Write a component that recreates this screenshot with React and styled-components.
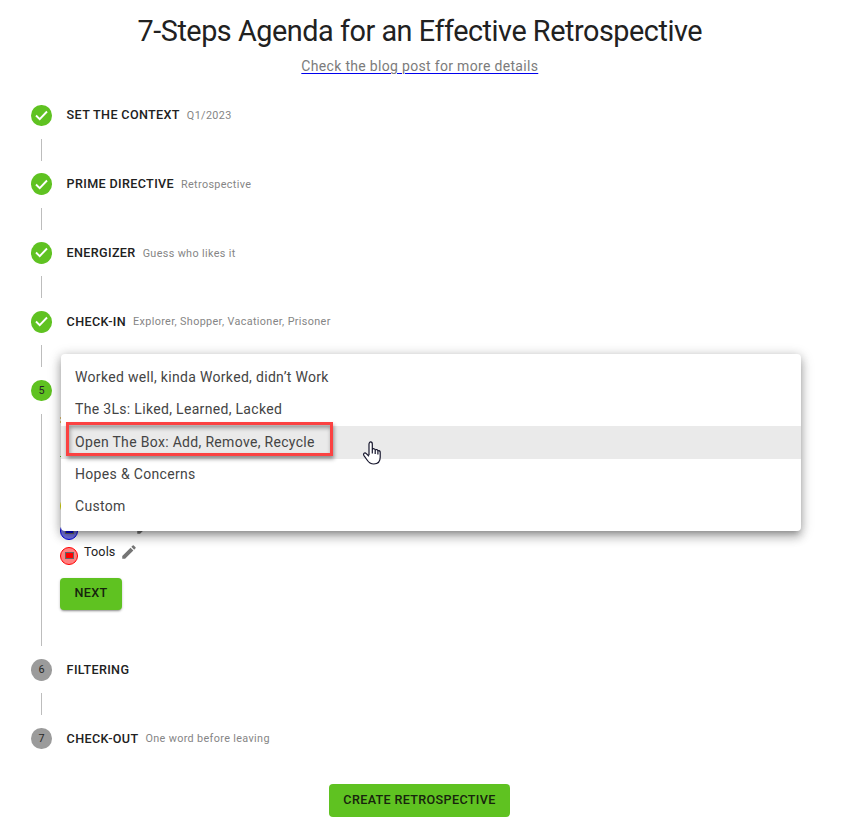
import React from "react";
import styled, { createGlobalStyle } from "styled-components";

const Global = createGlobalStyle`
  * { box-sizing: border-box; }
  body { margin: 0; background: #fff; font-family: Roboto, "Liberation Sans", sans-serif; color: #212121; }
`;
const Page = styled.main`
  width: 847px;
  height: 822px;
  overflow: hidden;
  display: flex;
  flex-direction: column;
`;
const Header = styled.header`
  width: 839.6px;
  height: 92px;
  flex-shrink: 0;
  display: flex;
  flex-direction: column;
  align-items: center;
`;
const Title = styled.h1`
  margin: 12px 0 0;
  font-size: 28.8px;
  line-height: 38px;
  font-weight: 400;
  letter-spacing: -0.46px;
  white-space: nowrap;
  color: #212121;
`;
const BlogLink = styled.a`
  margin-top: 6px;
  font-size: 14px;
  line-height: 20px;
  font-weight: 400;
  letter-spacing: 0.32px;
  color: #7b7b7b;
  text-decoration-line: underline;
  text-decoration-color: #0000ee;
  text-decoration-thickness: 1px;
  text-underline-offset: 2px;
`;
const Stepper = styled.section`
  display: flex;
  flex-direction: column;
  padding-left: 31px;
`;
const StepRow = styled.div`
  height: 46.8px;
  display: flex;
  align-items: center;
`;
const Badge = styled.span`
  width: 21px;
  height: 21.6px;
  margin-right: 14.6px;
  border-radius: 50%;
  background: ${(p) => (p.$active ? "#5fc221" : "#9b9b9b")};
  display: flex;
  align-items: center;
  justify-content: center;
  font-size: 10.8px;
  color: #272727;
`;
const StepName = styled.span`
  font-size: 12.6px;
  line-height: 20px;
  font-weight: 500;
  letter-spacing: 0.35px;
  color: #212121;
`;
const StepNote = styled.span`
  margin: 1.1px 0 0 7px;
  font-size: 10.8px;
  line-height: 20px;
  font-weight: 400;
  letter-spacing: 0.36px;
  color: #858585;
`;
const Connector = styled.div`
  height: 22px;
  margin-left: 10px;
  border-left: 1px solid #bdbdbd;
`;
const StepBody = styled.div`
  position: relative;
  height: 232.5px;
  margin-left: 10px;
  padding-left: 18px;
  border-left: 1px solid #bdbdbd;
  display: flex;
  flex-direction: column;
  align-items: flex-start;
`;
const Columns = styled.div`
  display: flex;
  flex-direction: column;
  gap: 7px;
  padding-top: 83px;
`;
const ColumnRow = styled.div`
  height: 18px;
  display: flex;
  align-items: center;
`;
const Swatch = styled.span`
  width: 18px;
  height: 18px;
  border: 1px solid ${(p) => p.$color};
  border-radius: 50%;
  background: ${(p) => p.$tint};
  display: flex;
  align-items: center;
  justify-content: center;
  &::after {
    content: "";
    box-sizing: border-box;
    width: 9px;
    height: 7px;
    margin: -1px 0 0 1px;
    background: ${(p) => p.$color};
    border: 1px solid #666;
  }
`;
const ColumnName = styled.span`
  width: ${(p) => p.$width}px;
  margin: -8px 5px 0 6px;
  font-size: 12.6px;
  line-height: 18px;
  letter-spacing: 0.12px;
  white-space: nowrap;
`;
const Pencil = styled.svg`
  width: 18px;
  height: 18px;
  margin-top: -8px;
  fill: #757575;
`;
const Button = styled.button`
  display: block;
  width: ${(p) => p.$width}px;
  height: ${(p) => (p.$raised ? 32 : 33)}px;
  padding: 0 0 1px;
  border: 0;
  border-radius: 4px;
  background: #5fc221;
  color: #17240d;
  font: 500 12.6px/22px Roboto, sans-serif;
  letter-spacing: 0.34px;
  box-shadow: ${(p) => (p.$raised ? "0 2px 2px -1px rgba(0,0,0,.3), 0 1px 3px rgba(0,0,0,.2)" : "none")};
`;
const NextSlot = styled.div`
  margin-top: 13px;
`;
const Footer = styled.footer`
  width: 839px;
  padding-top: 22px;
  display: flex;
  justify-content: center;
`;
const Menu = styled.ul`
  position: absolute;
  left: 19px;
  top: -60px;
  width: 740px;
  height: 177px;
  margin: 0;
  padding: 7px 0 8px;
  list-style: none;
  border-radius: 4px;
  background: #fff;
  box-shadow: 0 5px 5px -3px rgba(0,0,0,.2), 0 7px 9px 1px rgba(0,0,0,.14), 0 3px 13px 2px rgba(0,0,0,.14), 0 1px 10px rgba(0,0,0,.13);
`;
const MenuItem = styled.li`
  height: ${(p) => (p.$selected ? 33 : 32.4)}px;
  padding-left: 14px;
  font-size: 14px;
  line-height: ${(p) => (p.$low ? 31.6 : 33)}px;
  letter-spacing: 0.32px;
  color: #444;
  background: ${(p) => (p.$selected ? "#eaeaea" : "transparent")};
`;
const Highlight = styled.span`
  position: absolute;
  left: 5px;
  top: 68px;
  width: 267px;
  height: 34px;
  border: 3px solid #fb4242;
  box-shadow: 1px 3px 4px rgba(0,0,0,.4), inset 1px 3px 4px rgba(0,0,0,.35);
`;
const Cursor = styled.svg`
  position: absolute;
  left: 301px;
  top: 86px;
  width: 20px;
  height: 26px;
`;
const CoveredEdge = styled.i`
  position: absolute;
  left: 18px;
  top: ${(p) => p.$top}px;
  width: 2px;
  height: ${(p) => p.$height}px;
  background: ${(p) => p.$color};
`;

const Check = () => (
  <svg width="21" height="21" viewBox="0 0 21 21" fill="none">
    <path d="M5 10.5 8.7 14.1 16 6.5" stroke="#fff" strokeWidth="1.9" />
  </svg>
);

function Step({ n, name, note, done, active }) {
  return (
    <StepRow>
      <Badge $active={done || active}>{done ? <Check /> : n}</Badge>
      <StepName>{name}</StepName>
      {note && <StepNote>{note}</StepNote>}
    </StepRow>
  );
}

const finished = [
  ["SET THE CONTEXT", "Q1/2023"],
  ["PRIME DIRECTIVE", "Retrospective"],
  ["ENERGIZER", "Guess who likes it"],
  ["CHECK-IN", "Explorer, Shopper, Vacationer, Prisoner"],
];
const columns = [
  { name: "", width: 44, color: "#e6e600", tint: "#f2f27f" },
  { name: "", width: 46, color: "#0000e6", tint: "#7777e8" },
  { name: "Tools", width: 31, color: "#ff0000", tint: "#ff8080" },
];
const options = [
  "Worked well, kinda Worked, didn’t Work",
  "The 3Ls: Liked, Learned, Lacked",
  "Open The Box: Add, Remove, Recycle",
  "Hopes & Concerns",
  "Custom",
];

export default function App() {
  return (
    <Page>
      <Global />
      <Header>
        <Title>7-Steps Agenda for an Effective Retrospective</Title>
        <BlogLink href="#">Check the blog post for more details</BlogLink>
      </Header>
      <Stepper>
        {finished.map(([name, note]) => (
          <React.Fragment key={name}>
            <Step name={name} note={note} done />
            <Connector />
          </React.Fragment>
        ))}
        <Step n={5} active />
        <StepBody>
          <Columns>
            {columns.map((c) => (
              <ColumnRow key={c.color}>
                <Swatch $color={c.color} $tint={c.tint} />
                <ColumnName $width={c.width}>{c.name}</ColumnName>
                <Pencil viewBox="0 0 24 24">
                  <path d="M3 17.25V21h3.75L17.81 9.94l-3.75-3.75zM20.71 7.04a1 1 0 0 0 0-1.41l-2.34-2.34a1 1 0 0 0-1.41 0l-1.83 1.83 3.75 3.75z" />
                </Pencil>
              </ColumnRow>
            ))}
          </Columns>
          <NextSlot>
            <Button $width={62} $raised>NEXT</Button>
          </NextSlot>
          <CoveredEdge $top={3} $height={2} $color="#e8c878" />
          <CoveredEdge $top={7} $height={2} $color="#e8c878" />
          <CoveredEdge $top={42} $height={1} $color="#5fc221" />
          <Menu>
            {options.map((o, i) => (
              <MenuItem key={o} $selected={i === 2} $low={i > 2}>{o}</MenuItem>
            ))}
            <Highlight />
            <Cursor viewBox="0 0 20 26">
              <path
                d="M7 15V4.2C7 1.2 10.3 1.2 10.3 4.2V9.5C10.8 8.3 13 8.5 13.2 10.1 14 9 15.8 9.5 15.9 11 17.1 10.2 18.2 11 18.2 12.4V17.3C18.2 21.5 15.6 24 11.8 24 8.5 24 6.8 22.7 5.1 20L1.8 15.3C.8 13.4 2.8 12.2 4.3 13.6L7 16.2M10.3 9.5V13.5M13.2 10.1V14M15.9 11V14.5"
                fill="#fff"
                stroke="#14142b"
                strokeWidth="1.2"
                strokeLinejoin="round"
              />
            </Cursor>
          </Menu>
        </StepBody>
        <Step n={6} name="FILTERING" />
        <Connector />
        <Step n={7} name="CHECK-OUT" note="One word before leaving" />
      </Stepper>
      <Footer>
        <Button $width={181}>CREATE RETROSPECTIVE</Button>
      </Footer>
    </Page>
  );
}
